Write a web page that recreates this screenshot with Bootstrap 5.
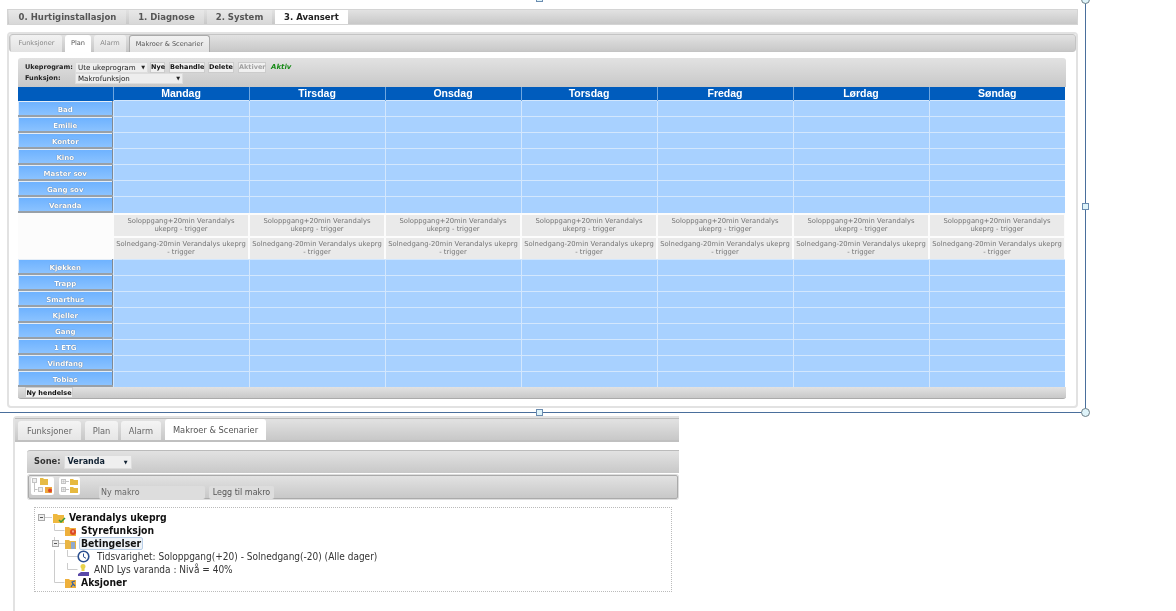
<!DOCTYPE html>
<html lang="no">
<head>
<meta charset="utf-8">
<title>Plan</title>
<link href="https://cdn.jsdelivr.net/npm/bootstrap@5.3.0/dist/css/bootstrap.min.css" rel="stylesheet">
<style>
html,body{height:611px;overflow:hidden;background:#fff}
body{font-family:"DejaVu Sans","Liberation Sans",sans-serif;color:#333;position:relative}
.shot{padding:9px 0 0 7px;width:1176px;height:611px;filter:blur(.4px)}
.grad{background:linear-gradient(#e2e2e2,#c8c8c8)}
.mainbar{width:1071px;height:16px;border:1px solid #d4d4d4;gap:3px;padding-left:1px}
.mainbar .tabx{font-size:8.5px;font-weight:700;color:#555;line-height:14px;text-align:center;background:linear-gradient(#e8e8e8,#d8d8d8)}
.mainbar .tabx.on{background:#fff;color:#222}
.m0{width:117px}.m1{width:75px}.m2{width:65px}.m3{width:73px}
.panel1{width:1071px;height:376px;margin-top:7px;border:2px solid #e2e2e2;border-radius:4px}
.subbar{height:18px;border:1px solid #c4c4c4;border-radius:3px;padding:0 0 0 1px;gap:3px}
.subtab{font-size:6.6px;line-height:16px;height:17px;text-align:center;color:#888;background:linear-gradient(#f2f2f2,#e2e2e2);border-radius:3px 3px 0 0}
.subtab.on{background:#fff;color:#555;height:18px}
.subtab.dk{color:#555;border:1px solid #aaa;border-bottom:0}
.s0{width:51px}.s1{width:26px}.s2{width:32px}.s3{width:81px}
.tools{width:1048px;height:29px;margin:6px 0 0 9px;border-radius:3px 3px 0 0;padding:4px 0 0 7px;font-size:6.5px;font-weight:700;color:#222;line-height:10px}
.lbls{width:50px}
.tools .rowline{height:11px}
.sel{background:#eee;border:1px solid #ddd;font-weight:500;padding:0 2px;font-size:7.1px;line-height:9px;height:11px;color:#222}
.sel1{width:73px;margin-right:2px}.sel2{width:108px}
.caret{font-size:5px}
.btx{background:#f0f0f0;border:1px solid #ccc;font-size:6.5px;line-height:9px;height:11px;padding:0;text-align:center;color:#111;font-weight:700;white-space:nowrap}
.btx.off{color:#a0a0a0}
.w15{width:15px;margin-right:4px}.w36{width:36px;margin-right:3px}.w26{width:26px;margin-right:4px}.w28{width:28px}.w48{width:48px}
.aktiv{color:#178a17;font-style:italic;font-size:7px;margin-left:5px}
.plan{width:1047px;margin:0 0 0 9px;border-collapse:collapse;table-layout:fixed}
.plan th{height:13px;background:#005cbd;color:#fff;font:700 10.5px/13px "Liberation Sans",Arial,sans-serif;text-align:center;padding:0;border-left:1px solid #6fa6df}
.plan th:first-child{border-left:0}
.plan td{height:16px;padding:0;background:#a8d1ff;border-left:1px solid #d3e7fd;border-top:1px solid #d3e7fd}
.plan td.zone{background:linear-gradient(#6cb1ff,#8fc5ff);border:0;box-shadow:inset 0 -2px 0 #98a0a8,inset -1px 0 0 #7f8a96,inset 1px 0 0 #d8e8fb,inset 0 1px 0 #e4edf7;color:#fff;font-size:7px;font-weight:700;text-align:center;text-shadow:0 0 1px #456;line-height:14px;padding-top:2px}
.plan .ex td{height:46px;background:#fcfcfc;border:0;vertical-align:top}
.plan .ex td .evt{height:21px;margin:2px 1px 0;background:#eaeaea;color:#747474;font-size:6.8px;line-height:8.5px;text-align:center;padding:2px 1px 0}
.plan .ex td .evt+.evt{margin-top:2px}
.foot{width:1048px;height:12px;margin-left:9px;border-bottom:1px solid #aaa;border-radius:0 0 3px 3px;padding-left:7px}
.foot .btx{height:11px;line-height:10px}
.panel2{width:666px;height:195px;margin:8px 0 0 6px;border-left:2px solid #e2e2e2;border-top:2px solid #e2e2e2;border-radius:4px 0 0 0}
.bigbar{height:24px;border-top:1px solid #bbb;border-bottom:2px solid #c0c0c0;padding:3px 0 0 3px;gap:3px;align-items:flex-end}
.bigtab{font-size:8.3px;line-height:19px;height:19px;padding-top:1px;text-align:center;color:#666;background:linear-gradient(#f4f4f4,#e6e6e6);border-radius:3px 3px 0 0}
.bigtab.on{background:#fff;color:#555;height:21px;line-height:21px}
.b0{width:63px}.b1{width:33px;margin-left:1px}.b2{width:40px}.b3{width:101px;margin-left:1px}
.sonebar{height:23px;margin:8px 0 0 12px;border-top:1px solid #bbb;border-radius:3px 0 0 0;padding:4px 0 0 7px;font-size:8.3px;font-weight:700;color:#333;gap:3px;line-height:13px}
.sone{width:68px;height:14px;background:#efefef;border:1px solid #ddd;font-weight:700;padding:0 3px;color:#123;font-size:8px;line-height:12px}
.iconbar{height:24px;margin:2px 1px 0 13px;border:1px solid #aaa;border-radius:2px;box-shadow:0 0 0 1px #ddd;padding:1px 0 0 2px}
.treebtn{background:#fff;height:18px;border-radius:2px}
.treebtn svg{display:block}
.tb1{width:23px}.tb2{width:21px;margin-left:5px}
.nym{width:106px;height:13px;background:#ddd;color:#666;font-size:8px;line-height:13px;padding-left:2px;margin:9px 0 0 19px;border-radius:2px}
.leggb{width:65px;height:13px;background:#ddd;color:#555;font-size:8px;line-height:13px;text-align:center;margin:9px 0 0 4px;border-radius:2px}
.treebox{width:638px;height:85px;margin:8px 0 0 19px;border:1px dotted #bbb;padding-top:3px}
.trow{height:13px;line-height:13px;font-family:"DejaVu Sans Condensed","Liberation Sans",sans-serif;font-stretch:condensed;font-size:10px;color:#333;white-space:nowrap}
.trow svg{flex:none}
.trow b{color:#111;font-weight:700;font-size:10.3px}
.trow b.foc{border:1px solid #b9cfe8;background:#eef3f8;border-radius:2px;padding:0 1px;margin-left:-2px;line-height:11px;height:13px}
.frame{position:absolute;background:#4a6f9c}
.fh{left:0;top:412px;width:1085px;height:1px}
.fv{left:1085px;top:0;width:1px;height:412px}
.hs{position:absolute;width:7px;height:7px;background:#dff4fa;border:1px solid #6b8cb0}
.hc{position:absolute;width:9px;height:9px;background:#dff4fa;border:1px solid #6f8088;border-radius:50%}
</style>
</head>
<body>
<div class="shot">
  <div class="mainbar grad d-flex">
    <div class="tabx m0">0. Hurtiginstallasjon</div>
    <div class="tabx m1">1. Diagnose</div>
    <div class="tabx m2">2. System</div>
    <div class="tabx m3 on">3. Avansert</div>
  </div>
  <div class="panel1">
    <div class="subbar grad d-flex">
      <div class="subtab s0">Funksjoner</div>
      <div class="subtab s1 on">Plan</div>
      <div class="subtab s2">Alarm</div>
      <div class="subtab s3 dk">Makroer &amp; Scenarier</div>
    </div>
    <div class="tools grad">
      <div class="d-flex rowline">
        <div class="lbls">Ukeprogram:</div>
        <div class="sel sel1 d-flex justify-content-between"><span>Ute ukeprogram</span><span class="caret">▼</span></div>
        <div class="btx w15">Nye</div>
        <div class="btx w36">Behandle</div>
        <div class="btx w26">Delete</div>
        <div class="btx w28 off">Aktiver</div>
        <div class="aktiv">Aktiv</div>
      </div>
      <div class="d-flex rowline">
        <div class="lbls">Funksjon:</div>
        <div class="sel sel2 d-flex justify-content-between"><span>Makrofunksjon</span><span class="caret">▼</span></div>
      </div>
    </div>
    <table class="plan">
      <colgroup><col style="width:95px"><col span="7"></colgroup>
      <thead><tr><th></th><th>Mandag</th><th>Tirsdag</th><th>Onsdag</th><th>Torsdag</th><th>Fredag</th><th>Lørdag</th><th>Søndag</th></tr></thead>
      <tbody>
        <tr><td class="zone">Bad</td><td></td><td></td><td></td><td></td><td></td><td></td><td></td></tr>
        <tr><td class="zone">Emilie</td><td></td><td></td><td></td><td></td><td></td><td></td><td></td></tr>
        <tr><td class="zone">Kontor</td><td></td><td></td><td></td><td></td><td></td><td></td><td></td></tr>
        <tr><td class="zone">Kino</td><td></td><td></td><td></td><td></td><td></td><td></td><td></td></tr>
        <tr><td class="zone">Master sov</td><td></td><td></td><td></td><td></td><td></td><td></td><td></td></tr>
        <tr><td class="zone">Gang sov</td><td></td><td></td><td></td><td></td><td></td><td></td><td></td></tr>
        <tr><td class="zone">Veranda</td><td></td><td></td><td></td><td></td><td></td><td></td><td></td></tr>
        <tr class="ex"><td></td>
          <td><div class="evt">Soloppgang+20min Verandalys ukeprg - trigger</div><div class="evt">Solnedgang-20min Verandalys ukeprg - trigger</div></td>
          <td><div class="evt">Soloppgang+20min Verandalys ukeprg - trigger</div><div class="evt">Solnedgang-20min Verandalys ukeprg - trigger</div></td>
          <td><div class="evt">Soloppgang+20min Verandalys ukeprg - trigger</div><div class="evt">Solnedgang-20min Verandalys ukeprg - trigger</div></td>
          <td><div class="evt">Soloppgang+20min Verandalys ukeprg - trigger</div><div class="evt">Solnedgang-20min Verandalys ukeprg - trigger</div></td>
          <td><div class="evt">Soloppgang+20min Verandalys ukeprg - trigger</div><div class="evt">Solnedgang-20min Verandalys ukeprg - trigger</div></td>
          <td><div class="evt">Soloppgang+20min Verandalys ukeprg - trigger</div><div class="evt">Solnedgang-20min Verandalys ukeprg - trigger</div></td>
          <td><div class="evt">Soloppgang+20min Verandalys ukeprg - trigger</div><div class="evt">Solnedgang-20min Verandalys ukeprg - trigger</div></td>
        </tr>
        <tr><td class="zone">Kjøkken</td><td></td><td></td><td></td><td></td><td></td><td></td><td></td></tr>
        <tr><td class="zone">Trapp</td><td></td><td></td><td></td><td></td><td></td><td></td><td></td></tr>
        <tr><td class="zone">Smarthus</td><td></td><td></td><td></td><td></td><td></td><td></td><td></td></tr>
        <tr><td class="zone">Kjeller</td><td></td><td></td><td></td><td></td><td></td><td></td><td></td></tr>
        <tr><td class="zone">Gang</td><td></td><td></td><td></td><td></td><td></td><td></td><td></td></tr>
        <tr><td class="zone">1 ETG</td><td></td><td></td><td></td><td></td><td></td><td></td><td></td></tr>
        <tr><td class="zone">Vindfang</td><td></td><td></td><td></td><td></td><td></td><td></td><td></td></tr>
        <tr><td class="zone">Tobias</td><td></td><td></td><td></td><td></td><td></td><td></td><td></td></tr>
      </tbody>
    </table>
    <div class="foot grad d-flex"><div class="btx w48">Ny hendelse</div></div>
  </div>

  <div class="panel2">
    <div class="bigbar grad d-flex">
      <div class="bigtab b0">Funksjoner</div>
      <div class="bigtab b1">Plan</div>
      <div class="bigtab b2">Alarm</div>
      <div class="bigtab b3 on">Makroer &amp; Scenarier</div>
    </div>
    <div class="sonebar grad d-flex">
      <span>Sone:</span>
      <div class="sone d-flex justify-content-between"><span>Veranda</span><span class="caret">▼</span></div>
    </div>
    <div class="iconbar grad d-flex">
      <div class="treebtn tb1">
        <svg width="23" height="18" viewBox="0 0 23 18"><g fill="none" stroke="#c4c4c4"><rect x="1.500" y="1.500" width="4" height="4" fill="#eee"/><path d="M3.500 6v9M3.500 12.500h3"/><rect x="7.500" y="10.500" width="4" height="4" fill="#eee"/></g><path d="M9 1h3l1 1h4v6H9z" fill="#e6bb45"/><path d="M14 10h7v6h-7z" fill="#eea83c"/><circle cx="19" cy="13.500" r="2" fill="#d9432b"/></svg>
      </div>
      <div class="treebtn tb2">
        <svg width="21" height="18" viewBox="0 0 21 18"><g fill="none" stroke="#c4c4c4"><rect x="2.500" y="2.500" width="4" height="4" fill="#eee"/><rect x="2.500" y="10.500" width="4" height="4" fill="#eee"/><path d="M3.500 4.500h2M4.500 3.500v2M3.500 12.500h2M4.500 11.500v2M7 4.500h3M7 12.500h3"/></g><path d="M11 2h3l1 1h4v5h-8zM11 10h3l1 1h4v5h-8z" fill="#e6b93f"/></svg>
      </div>
      <div class="nym">Ny makro</div>
      <div class="leggb">Legg til makro</div>
    </div>
    <div class="treebox">
      <div class="trow d-flex">
        <svg width="34" height="13" viewBox="0 0 34 13"><rect x="3.500" y="3.500" width="6" height="6" fill="#eee" stroke="#aaa"/><path d="M5 6.500h3" stroke="#555"/><path d="M10 6.500h7" stroke="#ccc"/><path d="M18 3h4l1 1h6v8H18z" fill="#eeb83f"/><path d="M24 9l2 2 4-4" stroke="#3a9a3a" stroke-width="1.500" fill="none"/></svg>
        <b>Verandalys ukeprg</b>
      </div>
      <div class="trow d-flex">
        <svg width="46" height="13" viewBox="0 0 46 13"><path d="M19.500 0v6.500h10" stroke="#ccc" fill="none"/><path d="M30 3h4l1 1h6v8H30z" fill="#eeb03c"/><circle cx="38" cy="8" r="3" fill="#dd4a25"/><path d="M38 6.500v2" stroke="#fff"/></svg>
        <b>Styrefunksjon</b>
      </div>
      <div class="trow d-flex">
        <svg width="46" height="13" viewBox="0 0 46 13"><path d="M19.500 0v3" stroke="#ccc"/><rect x="17.500" y="3.500" width="6" height="6" fill="#eee" stroke="#aaa"/><path d="M19 6.500h3" stroke="#555"/><path d="M24 6.500h6" stroke="#ccc"/><path d="M30 3h4l1 1h6v8H30z" fill="#e9b544"/><rect x="36" y="5" width="4" height="7" fill="#8fa9d0"/></svg>
        <b class="foc">Betingelser</b>
      </div>
      <div class="trow d-flex">
        <svg width="62" height="13" viewBox="0 0 62 13"><path d="M19.500 0v13" stroke="#ccc"/><path d="M32.500 0v6.500h10" stroke="#ccc" fill="none"/><circle cx="48.500" cy="6.500" r="5.300" fill="#fff" stroke="#2b4f8f" stroke-width="1.600"/><path d="M48.500 3.500v3.300l2.500 1.500" stroke="#2b4f8f" fill="none"/></svg>
        <span>Tidsvarighet: Soloppgang(+20) - Solnedgang(-20) (Alle dager)</span>
      </div>
      <div class="trow d-flex">
        <svg width="59" height="13" viewBox="0 0 59 13"><path d="M19.500 0v13" stroke="#ccc"/><path d="M32.500 0v6.500h10" stroke="#ccc" fill="none"/><path d="M48 1a2.500 2.500 0 0 1 2.500 2.500c0 1-.7 1.600-1 2.500v2h-3V6c-.3-.9-1-1.500-1-2.500A2.500 2.500 0 0 1 48 1z" fill="#e8d24a"/><path d="M43 11l3-2h8v4H43z" fill="#5a4aa8"/></svg>
        <span>AND Lys varanda : Nivå = 40%</span>
      </div>
      <div class="trow d-flex">
        <svg width="46" height="13" viewBox="0 0 46 13"><path d="M19.500 0v6.500h10" stroke="#ccc" fill="none"/><path d="M30 3h4l1 1h6v8H30z" fill="#eeb03c"/><path d="M36 11l2-3-1-2 3-1M38 8l2 2" stroke="#2f5fa8" stroke-width="1.200" fill="none"/></svg>
        <b>Aksjoner</b>
      </div>
    </div>
  </div>
</div>
<div class="frame fh"></div>
<div class="frame fv"></div>
<div class="hc" style="left:1081px;top:-5px"></div>
<div class="hc" style="left:1081px;top:408px"></div>
<div class="hs" style="left:536px;top:-5px"></div>
<div class="hs" style="left:536px;top:409px"></div>
<div class="hs" style="left:1082px;top:203px"></div>
</body>
</html>
